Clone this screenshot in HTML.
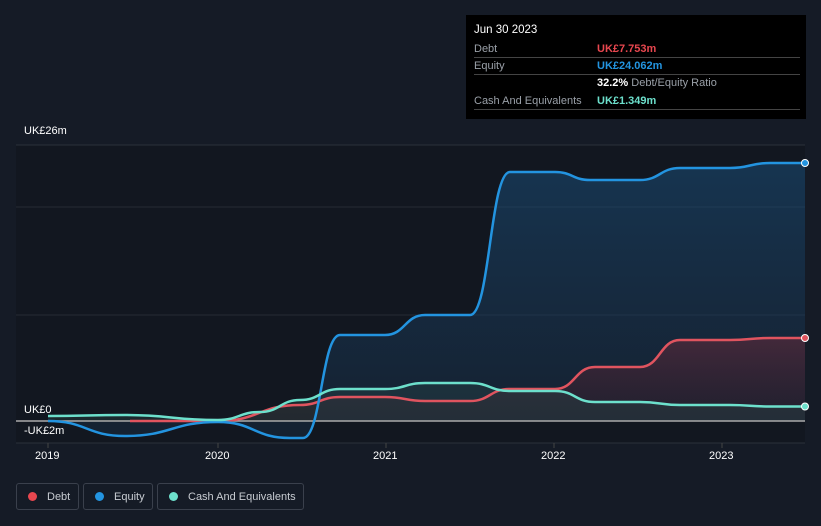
<!DOCTYPE html>
<html><head><meta charset="utf-8"><style>
body{margin:0;background:#151b26;font-family:"Liberation Sans",sans-serif;}
.wrap{position:relative;width:821px;height:526px;overflow:hidden;background:#151b26}
.tip{position:absolute;left:466px;top:15px;width:340px;height:104px;background:#000;color:#fff;font-size:11px}
.tip .r{position:absolute;left:8px;right:6px;border-bottom:1px solid #444;height:17px;line-height:19px}
.lbl{color:#9aa0a8}
.ax{position:absolute;color:#fff;font-size:11px}
.leg{position:absolute;top:483px;height:27px;border:1px solid #3a404c;border-radius:3px;color:#c8ccd2;font-size:11px;line-height:27px;box-sizing:border-box}
.leg i{display:inline-block;width:9px;height:9px;border-radius:50%;margin:0 10px 0 11px;vertical-align:-1px}
</style></head><body><div class="wrap">
<svg width="821" height="526" style="position:absolute;left:0;top:0">
<defs>
<linearGradient id="gb" x1="0" y1="0" x2="0" y2="1"><stop offset="0" stop-color="#1a4d78" stop-opacity=".55"/><stop offset="1" stop-color="#1a3450" stop-opacity=".35"/></linearGradient>
<linearGradient id="gr" x1="0" y1="0" x2="0" y2="1"><stop offset="0" stop-color="#7a2a3a" stop-opacity=".45"/><stop offset="1" stop-color="#3a1a24" stop-opacity=".3"/></linearGradient>
</defs>
<rect x="16" y="145" width="789" height="298" fill="#121720"/>
<line x1="16" y1="145" x2="805" y2="145" stroke="#2a303a"/>
<line x1="16" y1="207" x2="805" y2="207" stroke="#252b35"/>
<line x1="16" y1="315" x2="805" y2="315" stroke="#252b35"/>
<line x1="16" y1="443" x2="805" y2="443" stroke="#2a303a"/>
<path d="M48,421 C86.5,421 86.5,436 125,436 C171.5,436 171.5,422 218,422 C254,422 254,438 290,438 L303,438 C321.5,438 321.5,335 340,335 L385,335 C405,335 405,315 425,315 L470,315 C490,315 490,172 510,172 L555,172 C572.5,172 572.5,180 590,180 L640,180 C660,180 660,168 680,168 L730,168 C750,168 750,163 770,163 L805,163 L805,421 Z" fill="url(#gb)"/>
<path d="M130,421 L218,421 C259,421 259,405 300,405 C320,405 320,397 340,397 L385,397 C405,397 405,401 425,401 L470,401 C490,401 490,389 510,389 L555,389 C575,389 575,367 595,367 L640,367 C660,367 660,340 680,340 L730,340 C750,340 750,338 770,338 L805,338 L805,421 Z" fill="url(#gr)"/>
<path d="M48,416 C86,416 86,415 125,415 C171,415 171,420 218,420 C239,420 239,412 260,412 C280,412 280,400 300,400 C320,400 320,389 340,389 L385,389 C405,389 405,383 425,383 L470,383 C490,383 490,391 510,391 L555,391 C575,391 575,402 595,402 L640,402 C660,402 660,405 680,405 L730,405 C750,405 750,406.5 770,406.5 L805,406.5 L805,421 L48,421Z" fill="#2c4a4a" fill-opacity=".35"/>
<line x1="16" y1="421" x2="805" y2="421" stroke="#aaa" stroke-width="1.5"/>
<g fill="none" stroke-width="2.5" stroke-linejoin="round">
<path d="M130,421 L218,421 C259,421 259,405 300,405 C320,405 320,397 340,397 L385,397 C405,397 405,401 425,401 L470,401 C490,401 490,389 510,389 L555,389 C575,389 575,367 595,367 L640,367 C660,367 660,340 680,340 L730,340 C750,340 750,338 770,338 L805,338" stroke="#e0545f"/>
<path d="M48,421 C86.5,421 86.5,436 125,436 C171.5,436 171.5,422 218,422 C254,422 254,438 290,438 L303,438 C321.5,438 321.5,335 340,335 L385,335 C405,335 405,315 425,315 L470,315 C490,315 490,172 510,172 L555,172 C572.5,172 572.5,180 590,180 L640,180 C660,180 660,168 680,168 L730,168 C750,168 750,163 770,163 L805,163" stroke="#2394e0"/>
<path d="M48,416 C86,416 86,415 125,415 C171,415 171,420 218,420 C239,420 239,412 260,412 C280,412 280,400 300,400 C320,400 320,389 340,389 L385,389 C405,389 405,383 425,383 L470,383 C490,383 490,391 510,391 L555,391 C575,391 575,402 595,402 L640,402 C660,402 660,405 680,405 L730,405 C750,405 750,406.5 770,406.5 L805,406.5" stroke="#6de0cc"/>
</g>
<circle cx="805" cy="163" r="3.5" fill="#2394e0" stroke="#fff" stroke-width="1"/>
<circle cx="805" cy="338" r="3.5" fill="#e0545f" stroke="#fff" stroke-width="1"/>
<circle cx="805" cy="406.5" r="3.5" fill="#6de0cc" stroke="#fff" stroke-width="1"/>
<g stroke="#444"><line x1="48" y1="443" x2="48" y2="448"/><line x1="218" y1="443" x2="218" y2="448"/><line x1="386" y1="443" x2="386" y2="448"/><line x1="554" y1="443" x2="554" y2="448"/><line x1="722" y1="443" x2="722" y2="448"/></g>
</svg>
<div class="ax" style="left:24px;top:125px">UK£26m</div>
<div class="ax" style="left:24px;top:404px">UK£0</div>
<div class="ax" style="left:24px;top:425px">-UK£2m</div>
<div class="ax" style="left:35px;top:450px">2019</div>
<div class="ax" style="left:205px;top:450px">2020</div>
<div class="ax" style="left:373px;top:450px">2021</div>
<div class="ax" style="left:541px;top:450px">2022</div>
<div class="ax" style="left:709px;top:450px">2023</div>
<div class="tip">
<div style="position:absolute;left:8px;top:9px;font-size:11.5px">Jun 30 2023</div>
<div class="r" style="top:25px"><span class="lbl">Debt</span><span style="position:absolute;left:123px;color:#e8474f;font-weight:bold">UK£7.753m</span></div>
<div class="r" style="top:42px"><span class="lbl">Equity</span><span style="position:absolute;left:123px;color:#2394e0;font-weight:bold">UK£24.062m</span></div>
<div class="r" style="top:59px;border:0"><span style="position:absolute;left:123px"><b>32.2%</b> <span class="lbl">Debt/Equity Ratio</span></span></div>
<div class="r" style="top:77px"><span class="lbl">Cash And Equivalents</span><span style="position:absolute;left:123px;color:#6de0cc;font-weight:bold">UK£1.349m</span></div>
</div>
<div class="leg" style="left:16px;width:63px"><i style="background:#e8474f"></i>Debt</div>
<div class="leg" style="left:83px;width:70px"><i style="background:#2394e0"></i>Equity</div>
<div class="leg" style="left:157px;width:147px"><i style="background:#6de0cc"></i>Cash And Equivalents</div>
</div></body></html>
